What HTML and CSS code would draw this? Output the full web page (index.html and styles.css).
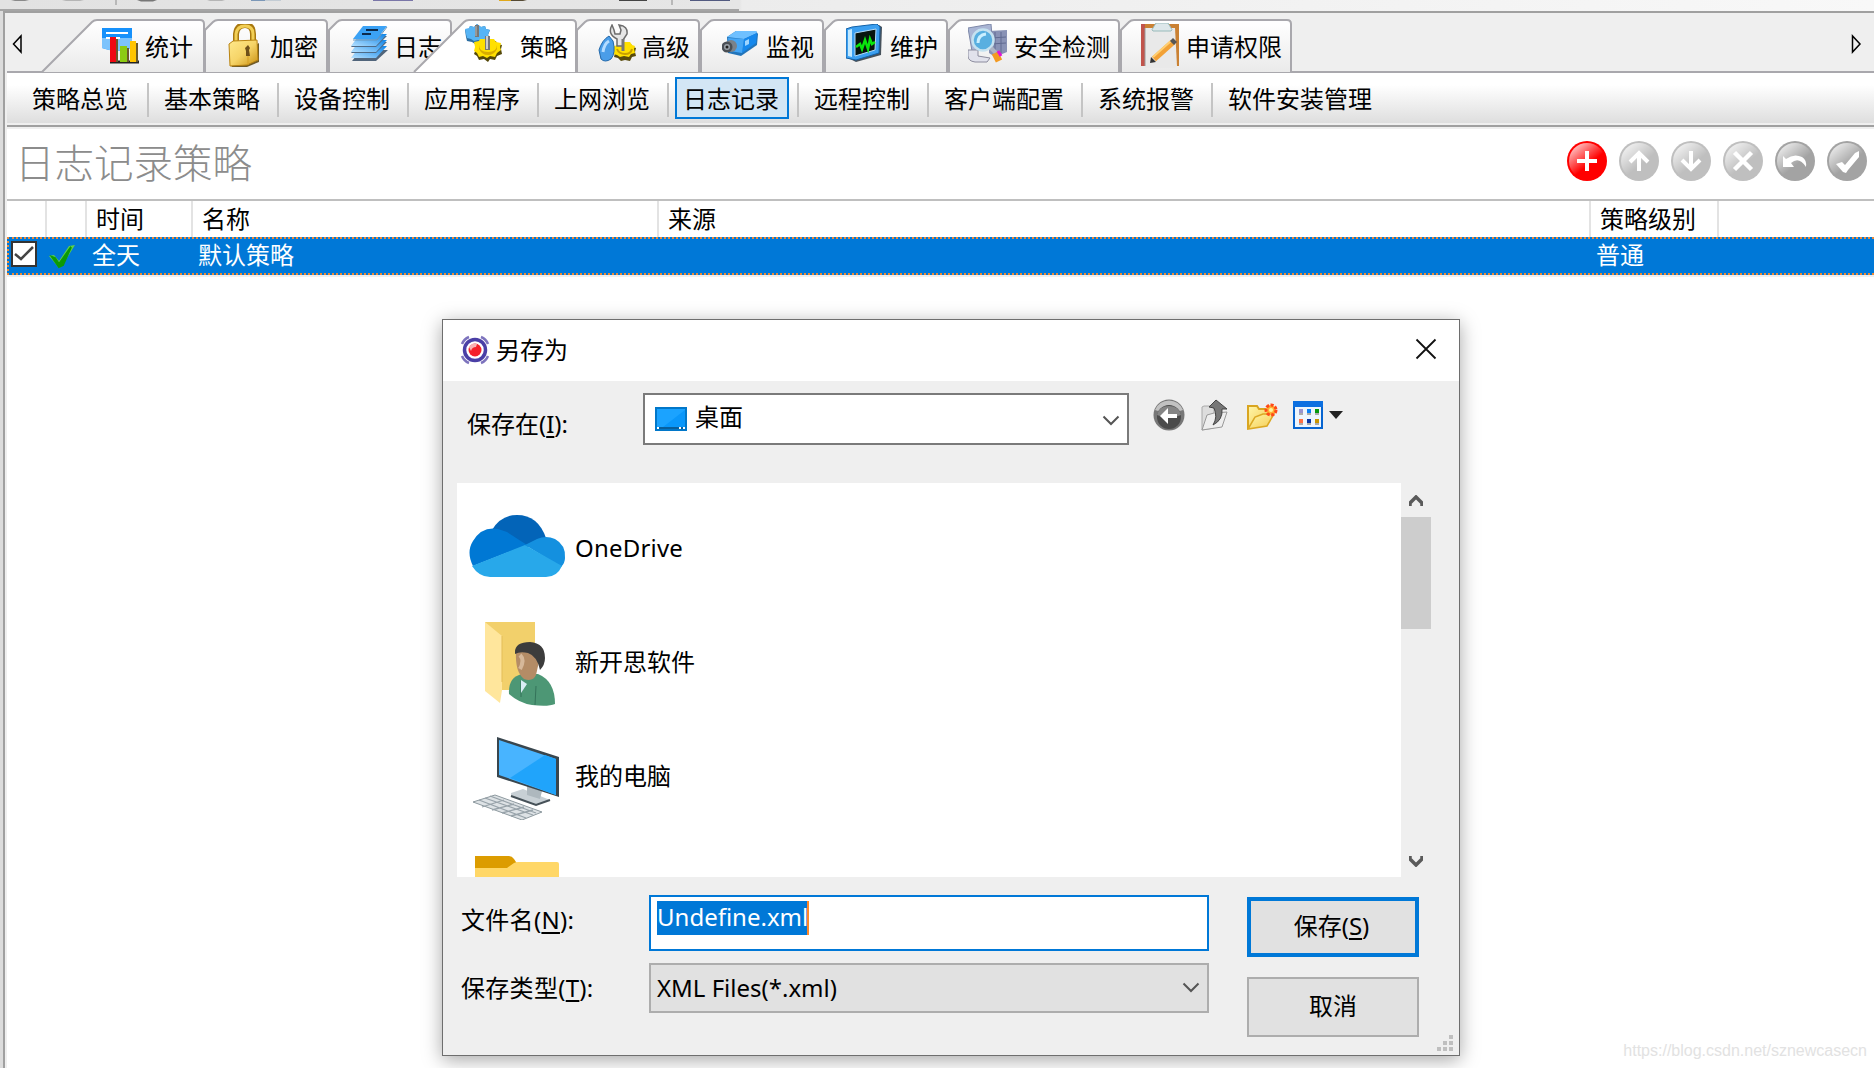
FILE: index.html
```
<!DOCTYPE html>
<html lang="zh-CN">
<head>
  <meta charset="UTF-8" />
  <meta name="viewport" content="width=device-width, initial-scale=1.0"/>
  <title>日志记录策略</title>
  <link rel="stylesheet" href="styles.css">
</head>
<body>
  <!-- shared gradients -->
  <svg class="defs" width="0" height="0">
    <defs>
      <linearGradient id="tabFill" x1="0" y1="0" x2="0" y2="1"><stop offset="0.1" stop-color="#fefefe"/><stop offset="1" stop-color="#eaeaea"/></linearGradient>
      <linearGradient id="blueR" x1="1" y1="0" x2="0" y2="1"><stop offset="0" stop-color="#0d84e8"/><stop offset="1" stop-color="#b4e0ff"/></linearGradient>
      <linearGradient id="gold" x1="0" y1="0" x2="1" y2="1"><stop offset="0" stop-color="#ffe98c"/><stop offset="0.5" stop-color="#f6d468"/><stop offset="1" stop-color="#c98f10"/></linearGradient>
      <linearGradient id="gloss" x1="0.15" y1="0.1" x2="0.55" y2="0.6"><stop offset="0" stop-color="#fff" stop-opacity="0.75"/><stop offset="1" stop-color="#fff" stop-opacity="0"/></linearGradient>
      <linearGradient id="folder" x1="0" y1="0" x2="1" y2="1"><stop offset="0" stop-color="#fff6a8"/><stop offset="1" stop-color="#f3cb52"/></linearGradient>
    </defs>
  </svg>

  <div class="toolbar">
    <svg width="760" height="11">
      <path d="M11 0h18l-4 1H15z" fill="#8a8a8a"/><path d="M62 0h22l-4 1H66z" fill="#b5b5b5"/>
      <path d="M115 0h2v5h-2z" fill="#b8b8b8"/>
      <path d="M137 0h20l-4 1.5H141z" fill="#777"/><path d="M207 0h18l-3 1H210z" fill="#b5b5b5"/>
      <path d="M251 0h14v1h-14z" fill="#7c98b8"/><path d="M265 0h16v1h-16z" fill="#c3ccd4"/><path d="M373 0h40v1h-40z" fill="#7a76a8"/>
      <path d="M499 0h12v1h-12z" fill="#e0a81a"/><path d="M511 0h16l-4 1h-12z" fill="#554a34"/><path d="M619 0h28v1h-28z" fill="#444"/>
      <path d="M671 0h2v5h-2z" fill="#b8b8b8"/><path d="M690 0h40v1h-40z" fill="#525a80"/>
    </svg>
  </div>

  <div class="window">
    <div class="tabs">
      <svg class="scroll-arrow" width="12" height="20" viewBox="0 0 12 20"><path d="M9 2v16L1.500 10z"/></svg>
      <div class="tab first">
        <svg class="shape" width="165" height="54"><path d="M1 53L51 3q2-2 5-2H159q4 0 4 4V53"/></svg>
        <svg class="icon" width="40" height="44" viewBox="0 0 40 44">
          <path d="M1 4h30v20q-14 6-30 0z" fill="#1691fb"/><path d="M1 14h30v10q-14 6-30 0z" fill="#7cc3fc"/>
          <path d="M5 9h22M5 14h14" stroke="#fff" stroke-width="2"/>
          <path d="M9 38h29" stroke="#222" stroke-width="3"/>
          <path d="M9 13h6v25H9z" fill="#f00812"/><path d="M19 22h7v16h-7z" fill="#8ccb13"/><path d="M29 17h6v21h-6z" fill="#ffc400"/>
          <path d="M16 15v23M27 24v14M36 19v19" stroke="#6b5a2a" stroke-width="2"/>
        </svg>
        <span>统计</span>
      </div>
      <div class="tab">
        <svg class="shape" width="125" height="54"><path d="M1 53V11L9 3q2-2 5-2H119q4 0 4 4V53"/></svg>
        <svg class="icon" width="40" height="44" viewBox="0 0 40 44">
          <path d="M10 20V10q1-9 9-9t8 9v8" fill="none" stroke="#a8780f" stroke-width="6"/><path d="M10 20V10q1-8 9-8t8 8v8" fill="none" stroke="#f2cf55" stroke-width="3"/>
          <path d="M4 40l2 3h15l12-5V19z" fill="#6f5b28"/>
          <path d="M3 20l4-3 24-1 1 20-11 5-17 1z" fill="url(#gold)" stroke="#b98311"/><path d="M22 22v19" stroke="#d59f22"/>
          <path d="M19 24l3-3 2 3-1 2 1 6h-4v-5z" fill="#6e501a"/>
        </svg>
        <span>加密</span>
      </div>
      <div class="tab">
        <svg class="shape" width="125" height="54"><path d="M1 53V11L9 3q2-2 5-2H119q4 0 4 4V53"/></svg>
        <svg class="icon" width="40" height="44" viewBox="0 0 40 44">
          <path d="M11 26h27L26 37H2z" fill="#51657b"/>
          <path d="M10 22h27L26 34H1z" fill="url(#blueR)"/><path d="M10 18h27L26 29H1z" fill="#4e6b87"/>
          <path d="M10 16h27L26 28H1z" fill="url(#blueR)"/><path d="M10 12h27L26 23H1z" fill="#4e6b87"/>
          <path d="M10 10h27L26 22H1z" fill="url(#blueR)"/><path d="M13 2h24L27 15H3z" fill="#3ba2f5"/><path d="M3 16h24L37 3" fill="none" stroke="#6f95b5"/>
          <path d="M16 6h12M12 10h9" stroke="#0c2a4c" stroke-width="2"/>
        </svg>
        <span>日志</span>
      </div>
      <div class="tab active">
        <svg class="shape" width="165" height="54"><path d="M1 53L51 3q2-2 5-2H159q4 0 4 4V53"/></svg>
        <svg class="icon" width="40" height="44" viewBox="0 0 40 44">
          <path d="M1 6l4-1 1-3 4 1 3-3 4 3 4-1 1 3 4 1-2 5 2 4-4 2-2 3-5-1-4 1-3-2-5-1-1-4z" fill="#2c6ea2"/>
          <path d="M1 5l4-1 1-2 4 1 3-3 4 3 4-1 1 3 4 1-2 4 1 3-4 2-2 2-5-1-4 1-3-2-4-1-1-4z" fill="#56b4f5"/>
          <path d="M11 1h4v12h-4z" fill="#777"/><path d="M12 2v10" stroke="#bbb"/>
          <path d="M11 20h5v-3h16l1 3 5 1-1 4 1 5-5 2-2 4-5-1-2 3-4-3-5 1-2-4-3-2 2-5z" fill="#544809"/>
          <path d="M10 18l5-1 1-2h14l2 3 5 1-1 4 1 3-4 3-2 4-5-1-3 2-4-2-4 1-2-4-3-2 1-4z" fill="#ffe000"/>
          <path d="M15 21q0 7 9 7t9-7v4q-3 6-9 6t-9-6z" fill="#d8ac00"/><path d="M21 12h5v14h-5z" fill="#777"/><path d="M23 12v13" stroke="#ccc" stroke-width="2"/>
        </svg>
        <span>策略</span>
      </div>
      <div class="tab">
        <svg class="shape" width="125" height="54"><path d="M1 53V11L9 3q2-2 5-2H119q4 0 4 4V53"/></svg>
        <svg class="icon" width="40" height="44" viewBox="0 0 40 44">
          <path d="M16 24l4-1 1-3h12l2 3 3 1-1 4 1 4-4 1-2 4-5-1-4 1-3-3-4-1 1-4z" fill="#594b0b"/>
          <path d="M16 22l4-1 1-3h11l2 3 3 1-1 3 1 4-4 1-2 3-5-1-4 1-3-2-4-1 1-4z" fill="#ffe000"/><path d="M19 25q2 5 8 5t7-5" fill="none" stroke="#c99f00" stroke-width="2"/>
          <path d="M1 26Q4 16 11 12l4 5q3 12-2 18-6 4-10 0z" fill="#4a9de8" stroke="#2268aa"/><path d="M5 28q1-8 6-11" fill="none" stroke="#b4dcff" stroke-width="3"/>
          <path d="M14 1l2 5 1 4h5l1-4-2-5q9 1 8 9l-4 6v6h-6v-7q-10-5-5-14z" fill="#e6e6e6" stroke="#6c6c6c" stroke-width="1.500"/>
          <path d="M25 15v12" stroke="#777" stroke-width="3"/>
        </svg>
        <span>高级</span>
      </div>
      <div class="tab">
        <svg class="shape" width="125" height="54"><path d="M1 53V11L9 3q2-2 5-2H119q4 0 4 4V53"/></svg>
        <svg class="icon camera" width="40" height="44" viewBox="2 0 40 44">
          <path d="M7 12l9-6h20l2 3-1 11-16 11-13-3z" fill="#2375ba"/><path d="M7 12l9-6h20l1 2-13 6z" fill="#6fc0ff"/><path d="M24 14l13-6-1 10-14 10z" fill="#1688ec"/><path d="M8 13l16 1-2 14-12-2z" fill="#45a6f5"/>
          <path d="M25 16l4-2v5l-4 2z" fill="#9fd5ff"/>
          <ellipse cx="11" cy="21" rx="6" ry="6" fill="#7a828a"/><circle cx="7" cy="22" r="5.500" fill="#4a4f55"/><circle cx="7" cy="22" r="3" fill="#9aa1a8"/><circle cx="7" cy="22" r="1.500" fill="#222"/>
        </svg>
        <span>监视</span>
      </div>
      <div class="tab">
        <svg class="shape" width="125" height="54"><path d="M1 53V11L9 3q2-2 5-2H119q4 0 4 4V53"/></svg>
        <svg class="icon" width="40" height="44" viewBox="1 0 40 44">
          <path d="M3 34l8 4 25-7 1-28-3-2z" fill="#47525c"/><path d="M1 5l6-2L32 0l3 3-1 26-23 7-10-2z" fill="#3b9ff0" stroke="#1161a8"/><path d="M3 6l4-1v28l-4-1z" fill="#c1e8ff"/>
          <path d="M10 9l21-4-1 21-20 6z" fill="#08150e" stroke="#b3dcfb"/>
          <path d="M11 23l4-3 2 5 3-9 3 9 2-10 2 5 3-2" fill="none" stroke="#09e60c" stroke-width="2.500"/>
        </svg>
        <span>维护</span>
      </div>
      <div class="tab wide">
        <svg class="shape" width="173" height="54"><path d="M1 53V11L9 3q2-2 5-2H167q4 0 4 4V53"/></svg>
        <svg class="icon" width="42" height="44" viewBox="1 0 42 44">
          <path d="M22 7l18-1v22l-12 5-6-4z" fill="#8992b5"/><path d="M28 8v22M34 8v21M24 14l15-1M24 20l15-1" stroke="#616b91"/>
          <path d="M1 4L24 0l2 24-21 3z" fill="#a9b5d4" stroke="#7d88a8"/><path d="M1 26h10v6l12 2-3 4H8q-7-1-7-6z" fill="#e1e2ec" stroke="#8c8c9e"/>
          <circle cx="16" cy="16" r="10.500" fill="#58afe0" stroke="#c5e2f0" stroke-width="2.500"/><path d="M11 19q0-8 8-9" stroke="#c9efff" stroke-width="3" fill="none"/>
          <path d="M24 24l5 5" stroke="#aeb4c4" stroke-width="4"/><path d="M28 29l4 8" stroke="#f39a21" stroke-width="7"/><path d="M31 27l3 5" stroke="#e014d8" stroke-width="3"/>
        </svg>
        <span>安全检测</span>
      </div>
      <div class="tab wide">
        <svg class="shape" width="173" height="54"><path d="M1 53V11L9 3q2-2 5-2H167q4 0 4 4V53"/></svg>
        <svg class="icon" width="42" height="46" viewBox="0 0 42 46">
          <path d="M1 1h38v42H1z" fill="#ca8133"/><path d="M1 1h4v42H1z" fill="#c1544c"/>
          <path d="M5 5h30l2 38-3 2H5z" fill="#e9e9e9"/><path d="M5 5v38" stroke="#999"/>
          <path d="M16 0h12l3 5q2 2 0 3H13q-2-1 0-3z" fill="#dde7ea" stroke="#9bb"/>
          <path d="M14 36L33 19" stroke="#f2a136" stroke-width="6"/><path d="M13 34L31 18" stroke="#ffcf73" stroke-width="2"/><path d="M10 40l1-6 5 5z" fill="#333"/><path d="M30 18l3-3 4 4-3 3z" fill="#555"/>
        </svg>
        <span>申请权限</span>
      </div>
      <div class="spacer"></div>
      <svg class="scroll-arrow right" width="12" height="20" viewBox="0 0 12 20"><path d="M2.500 2v16L10 10z"/></svg>
    </div>

    <div class="submenu">
      <a>策略总览</a>
      <a>基本策略</a>
      <a>设备控制</a>
      <a>应用程序</a>
      <a>上网浏览</a>
      <a class="selected">日志记录</a>
      <a>远程控制</a>
      <a>客户端配置</a>
      <a>系统报警</a>
      <a>软件安装管理</a>
    </div>

    <div class="heading">
      <h1>日志记录策略</h1>
      <div class="actions">
        <svg viewBox="0 0 40 40"><circle cx="20" cy="20" r="20" fill="#f00"/><circle cx="20" cy="20" r="18" fill="url(#gloss)"/><path d="M20 10v20M10 20h20" stroke="#fff" stroke-width="4"/></svg>
        <svg viewBox="0 0 40 40"><circle cx="20" cy="20" r="20" fill="#bfbfbf"/><circle cx="20" cy="20" r="18" fill="url(#gloss)"/><path d="M20 30V13M11 21l9-9 9 9" fill="none" stroke="#fff" stroke-width="4"/></svg>
        <svg viewBox="0 0 40 40"><circle cx="20" cy="20" r="20" fill="#bfbfbf"/><circle cx="20" cy="20" r="18" fill="url(#gloss)"/><path d="M20 10v17M11 19l9 9 9-9" fill="none" stroke="#fff" stroke-width="4"/></svg>
        <svg viewBox="0 0 40 40"><circle cx="20" cy="20" r="20" fill="#bfbfbf"/><circle cx="20" cy="20" r="18" fill="url(#gloss)"/><path d="M11.500 11.500l17 17M28.500 11.500l-17 17" stroke="#fff" stroke-width="4.500"/></svg>
        <svg viewBox="0 0 40 40"><circle cx="20" cy="20" r="20" fill="#a3a3a3"/><circle cx="20" cy="20" r="18" fill="url(#gloss)"/><path d="M8 15v11h11l-3-4q8-7 15 4 1-7-4-10-8-4-16 2z" fill="#fff"/></svg>
        <svg viewBox="0 0 40 40"><circle cx="20" cy="20" r="20" fill="#a3a3a3"/><circle cx="20" cy="20" r="18" fill="url(#gloss)"/><path d="M9 23l6-2 3 3 10-12 4-2v6l-11 13-2 3-3-1z" fill="#fff"/></svg>
      </div>
    </div>

    <div class="grid-row grid-head">
      <div></div><div></div><div>时间</div><div>名称</div><div>来源</div><div>策略级别</div><div></div>
    </div>
    <div class="grid-row grid-item">
      <div><svg width="26" height="26"><path d="M1 1h24v24H1z" fill="#fff" stroke="#333" stroke-width="2"/><path d="M4 13l6 5L22 6" fill="none" stroke="#444" stroke-width="2.500"/></svg></div>
      <div><svg width="26" height="24"><path d="M0 11l5-1 5 6L20 1l6-1-13 21-3 2z" fill="#5fcf4c"/><path d="M3 12l3 1 4 6L22 2l-8 18-4 2z" fill="#0c9a05" stroke="#0c9a05" stroke-width="2"/></svg></div>
      <div>全天</div><div>默认策略</div><div></div><div>普通</div><div></div>
    </div>
    <div class="grid-body"></div>
  </div>

  <div class="dialog">
    <div class="title-bar">
      <svg class="logo" width="30" height="30" viewBox="0 0 30 30">
        <g fill="none" stroke="#7d73bd" stroke-width="2.500"><path d="M2 9Q4 4 9 2M21 2q5 2 7 7M2 21q2 5 7 7M21 28q5-2 7-7"/></g>
        <circle cx="15" cy="15" r="10.500" fill="#fff" stroke="#4a3fa6" stroke-width="3.500"/>
        <circle cx="15" cy="15" r="6.500" fill="#f5202a"/><path d="M9 12q3-5 8-3l-1 3q-4 0-5 4z" fill="#f9b3b6"/>
      </svg>
      <span>另存为</span>
      <svg class="close" width="22" height="22"><path d="M1.500 1.500l19 19M20.500 1.500l-19 19" stroke="#111" stroke-width="1.800"/></svg>
    </div>

    <div class="look-in">
      <label>保存在(<u>I</u>):</label>
      <div class="combo">
        <svg width="32" height="24"><path d="M1 1h30v22H1z" fill="#1ba3ff" stroke="#0177c9" stroke-width="2"/><path d="M30 3v17H8z" fill="#0a97fa"/><path d="M2 20h28v2H2z" fill="#085f9d"/><path d="M2 20h2v2H2zM24 20h2v2h-2zM28 20h2v2h-2z" fill="#fff"/></svg>
        <span>桌面</span>
        <svg class="chevron" width="18" height="12"><path d="M1.500 1.500L9 9l7.500-7.500"/></svg>
      </div>
      <div class="nav-icons">
        <svg width="32" height="32" viewBox="0 0 32 32"><circle cx="16" cy="16" r="15.500" fill="#777"/><path d="M2 11a15 15 0 0 1 28 0q-14 6-28 0z" fill="#c2c2c2"/><circle cx="16" cy="18" r="12" fill="#4b4b4b"/><path d="M4 16q2-9 12-9t12 9q-12 5-24 0z" fill="#858585"/><path d="M7 17l8-8v6h9v4h-9v6z" fill="#fff"/></svg>
        <svg width="28" height="32" viewBox="0 0 28 32"><path d="M1 8l2-1h7l3 3v19l-12 2z" fill="#ddd" stroke="#aaa"/><path d="M1 31l5-15 7-2 13-1-5 15z" fill="#eee" stroke="#999"/><path d="M8 8l7-7 11 9h-5q1 11-9 16 5-8 1-17z" fill="#777" stroke="#444"/></svg>
        <svg width="32" height="28" viewBox="0 0 32 28"><path d="M1 27V4h9l2 3h9v7" fill="url(#folder)" stroke="#d9a520" stroke-width="2"/><path d="M1 27l7-12 8-3h11l-7 12z" fill="url(#folder)" stroke="#dba823" stroke-width="1.500"/><circle cx="24" cy="8" r="5" fill="#ffb133" stroke="#ff4a18" stroke-width="3" stroke-dasharray="3 1.500"/><circle cx="24" cy="8" r="2" fill="#fff3a0"/></svg>
        <svg width="50" height="28" viewBox="0 0 50 28"><path d="M1 1h28v26H1z" fill="#edf5fd" stroke="#0664d0" stroke-width="2"/><path d="M0 0h30v6H0z" fill="#0c6fe0"/>
          <path d="M6 8h4v4H6z" fill="#9893cd"/><path d="M14 8h4v4h-4z" fill="#0a80f5"/><path d="M22 8h4v4h-4z" fill="#06990e"/><path d="M6 18h4v4H6z" fill="#ff7043"/><path d="M14 18h4v4h-4z" fill="#0936a5"/><path d="M22 18h4v4h-4z" fill="#c89500"/>
          <path d="M6 12h4v2H6zM14 12h4v2h-4zM22 12h4v2h-4zM6 22h4v2H6zM14 22h4v2h-4zM22 22h4v2h-4z" fill="#aaa"/><path d="M36 10h14l-7 8z" fill="#222"/></svg>
      </div>
    </div>

    <div class="file-area">
      <div class="files">
        <div class="file">
          <svg width="100" height="84" viewBox="0 0 100 84">
            <path d="M24 26Q33 11 49 11q21 0 29 23L50 48z" fill="#0364b8"/>
            <path d="M5 62Q-2 48 5 37q9-15 25-12l9 3 20 13z" fill="#0078d4"/>
            <path d="M57 41l12-6q9-4 18 0 11 6 10 19 0 5-4 9z" fill="#1490df"/>
            <path d="M4 62l53-21 37 21q-5 11-16 11H22q-11 0-18-11z" fill="#28a8ea"/>
          </svg>
          <span>OneDrive</span>
        </div>
        <div class="file">
          <svg width="100" height="84" viewBox="0 0 100 84">
            <path d="M17 0h50v68H30z" fill="#f2d06b"/><path d="M17 0l17 14v54l-2 13-15-12z" fill="#ffe69c"/><path d="M34 14v46" stroke="#e3bd58"/>
            <path d="M41 72q-1-17 13-20h16q17 7 17 30-7 3-23 1-13-2-23-11z" fill="#4d9775"/><path d="M68 64l-1 19M53 59v16" stroke="#34735a"/>
            <path d="M53 58l6 4-6 9z" fill="#d9edf5"/><path d="M48 30q-1 20 8 27 9 3 12-4l5-22-18-8z" fill="#b48c66"/><path d="M52 33q5 5 0 14" stroke="#d6b89a" stroke-width="4" fill="none"/>
            <path d="M47 30q0-10 15-10 15 1 15 16 0 7-5 12-3-14-12-17-8-2-13 1z" fill="#3c3c3c"/>
          </svg>
          <span>新开思软件</span>
        </div>
        <div class="file">
          <svg width="100" height="84" viewBox="0 0 100 84">
            <path d="M43 57l12-4 27 11-14 5-25-9z" fill="#c8d0d5"/><path d="M43 60l25 9 14-5" fill="none" stroke="#465158" stroke-width="2"/><path d="M59 50l15 5-2 8-13-4z" fill="#aeb8be"/>
            <path d="M29 1l62 20v40L29 41z" fill="#39464e"/><path d="M31 4l57 19v36L31 39z" fill="#48b4ff"/><path d="M42 42l35-23 11 4v36z" fill="#20a4fb"/>
            <path d="M5 66l22-7 47 17-20 8z" fill="#dde2e5" stroke="#8d999f"/><path d="M11 64l47 18M17 62l48 17M22 60l46 17M14 71l22-7M24 74l22-6M34 77l22-6M43 80l22-6" stroke="#98a3aa" stroke-width="1.300"/>
          </svg>
          <span>我的电脑</span>
        </div>
        <div class="file">
          <svg width="100" height="84" viewBox="0 0 100 84"><path d="M7 6h34q3 0 5 3l4 6-6 5H7z" fill="#dc9c00"/><path d="M7 18h32l7-5q2-1 4-1h39q2 0 2 2v66H7z" fill="#ffd767"/></svg>
        </div>
      </div>
      <div class="scrollbar">
        <svg width="14" height="12"><path d="M1 11V8l6-6 6 6v3"/></svg>
        <div class="thumb"></div>
        <svg class="down" width="14" height="12"><path d="M1 1v3l6 6 6-6V1"/></svg>
      </div>
    </div>

    <div class="bottom">
      <div class="fields">
        <label>文件名(<u>N</u>):</label>
        <div class="name-input"><span class="selection">Undefine.xml</span></div>
        <label>保存类型(<u>T</u>):</label>
        <div class="type-combo">
          <span>XML Files(*.xml)</span>
          <svg class="chevron" width="18" height="12"><path d="M1.500 1.500L9 9l7.500-7.500"/></svg>
        </div>
      </div>
      <div class="buttons">
        <button class="default">保存(<u>S</u>)</button>
        <button>取消</button>
      </div>
    </div>
    <svg class="grip" width="16" height="16"><path d="M12 0h4v4h-4zM6 6h4v4H6zM12 6h4v4h-4zM0 12h4v4H0zM6 12h4v4H6zM12 12h4v4h-4z" fill="#bfbfbf"/></svg>
  </div>

  <div class="watermark">https://blog.csdn.net/sznewcasecn</div>
</body>
</html>
```

FILE: styles.css
```
* { margin: 0; padding: 0; box-sizing: border-box; }
html, body { height: 100%; overflow: hidden; }
body {
  display: flex;
  flex-direction: column;
  font-family: "Noto Sans CJK SC", sans-serif;
  font-size: 24px;
  font-weight: 400;
  line-height: 36px;
  color: #000;
  background: #dcdcdc;
  white-space: nowrap;
}
svg { display: block; flex: none; }
.defs { position: absolute; }

.toolbar {
  height: 11px;
  background: linear-gradient(to right, #e2e2e2 0, #e6e6e6 740px, #ececec 742px, #f8f8f8 100%);
}
.toolbar svg { border-bottom: 2px solid #a5a5a5; width: 739px; }

.window {
  flex: 1;
  display: flex;
  flex-direction: column;
  margin-left: 3px;
  padding-left: 2px;
  border-left: 2px solid #a0a0a0;
  border-top: 2px solid #a0a0a0;
  background: #efefef;
}

/* Tabs */
.tabs {
  display: flex;
  height: 60px;
  padding-top: 6px;
  border-bottom: 2px solid #a9a8ad;
}
.scroll-arrow { margin: 15px 17px 0 5px; fill: none; stroke: #000; stroke-width: 1.500; }
.scroll-arrow.right { margin: 15px 12px 0 0; }
.tab {
  position: relative;
  display: flex;
  align-items: center;
  width: 124px;
  height: 54px;
  padding-left: 22px;
}
.tab .icon, .tab span { position: relative; }
.tab span { margin-left: 4px; margin-bottom: 1px; }
.tab .icon { margin-bottom: 1px; }
.tab .icon.camera { margin-top: 3px; }
.shape { position: absolute; left: 0; top: 0; fill: url(#tabFill); stroke: #a9a8ad; stroke-width: 2; }
.tab.first { width: 163px; padding-left: 60px; }
.tab.active { width: 163px; margin-left: -39px; padding-left: 51px; z-index: 1; }
.tab.active .shape { fill: #fff; }
.tab.active span { margin-left: 16px; }
.tab.wide { width: 172px; padding-left: 20px; }
.spacer { flex: 1; }

.submenu {
  display: flex;
  align-items: center;
  height: 54px;
  padding-left: 11px;
  border-bottom: 2px solid #a0a0a0;
  background: linear-gradient(#fff 12px, #dedede 50px, #efefef 50px);
}
.submenu a {
  position: relative;
  height: 42px;
  margin: -2px 8px 0 8px;
  padding: 0 7px;
  border: 2px solid transparent;
  line-height: 37px;
}
.submenu a:first-child { margin-left: 5px; padding-right: 9px; }
.submenu a + a::before {
  content: "";
  position: absolute;
  left: -10px;
  top: 4px;
  width: 2px;
  height: 34px;
  background: #c4c4c4;
}
.submenu a.selected { padding: 0 8px 0 6px; border-color: #0078d7; background: #d3e6f5; }

.heading {
  display: flex;
  justify-content: space-between;
  height: 74px;
  padding: 12px 7px 0 8px;
  border-top: 2px solid #efefef;
  border-bottom: 2px solid #bfbfbf;
  background: #fff;
}
.heading h1 { font-size: 39.500px; font-weight: 300; line-height: 39px; color: #8c8c8c; }
.actions { display: flex; gap: 12px; }
.actions svg { width: 40px; height: 40px; }

/* Policy list */
.grid-row { display: grid; grid-template-columns: 40px 40px 106px 466px 932px 128px 1fr; background: #fff; }
.grid-head { height: 36px; line-height: 34px; }
.grid-head div { border-right: 2px solid #e3e3e3; padding-left: 9px; }
.grid-head div:last-child { border-right: 0; }
.grid-item {
  height: 38px;
  line-height: 30px;
  border: 2px dotted #ee8a36;
  border-right: 0;
  color: #fff;
  background: #0078d7;
}
.grid-item div { padding-left: 3px; }
.grid-item div:nth-child(1) { padding: 2px 0 0 2px; }
.grid-item div:nth-child(2) { padding: 6px 0 0 0; }
.grid-body { flex: 1; border-top: 2px solid #efefef; background: #fff; }

/* Save as dialog */
.dialog {
  position: absolute;
  left: 442px;
  top: 319px;
  width: 1018px;
  height: 737px;
  border: 1px solid #6e6e6e;
  background: #efefef;
  box-shadow: 0 4px 18px rgba(0,0,0,.35);
}
.dialog, .dialog button { font-family: "Noto Sans", "Noto Sans CJK SC", sans-serif; font-weight: 400; }
.title-bar {
  display: flex;
  align-items: center;
  height: 61px;
  padding: 0 22px 3px 17px;
  background: #fff;
}
.title-bar .logo { margin-top: 1px; }
.title-bar span { margin: 2px 0 0 6px; }
.title-bar .close { margin-left: auto; }
.look-in { display: flex; height: 102px; padding: 12px 0 0 24px; }
.look-in label { width: 176px; line-height: 61px; }
.combo {
  display: flex;
  align-items: center;
  width: 486px;
  height: 52px;
  padding: 0 7px 0 10px;
  border: 2px solid #7a7a7a;
  background: #fff;
}
.combo span { margin: -5px 0 0 8px; }
.combo .chevron { margin-top: 3px; }
.chevron { margin-left: auto; fill: none; stroke: #555; stroke-width: 2; }
.nav-icons { display: flex; align-items: center; height: 44px; padding-left: 24px; gap: 16px; }
.nav-icons svg:nth-child(2) { margin-right: 2px; }
.nav-icons svg:nth-child(3) { margin-top: 2px; }
.nav-icons svg:nth-child(4) { margin-left: -2px; }

.file-area { display: flex; height: 394px; margin-left: 14px; }
.files { width: 944px; padding-top: 8px; overflow: hidden; background: #fff; }
.file { display: flex; align-items: center; height: 114px; padding-left: 11px; }
.file + .file svg { margin-top: 4px; }
.file:first-child svg { margin-top: -4px; }
.file span { margin-left: 7px; }
.file:first-child span { letter-spacing: 0.2px; }
.scrollbar { display: flex; flex-direction: column; align-items: center; width: 30px; padding: 12px 0 10px; }
.scrollbar svg { fill: none; stroke: #5a5a5a; stroke-width: 3.500; }
.scrollbar .down { margin-top: auto; }
.thumb { width: 30px; height: 112px; margin-top: 10px; background: #cdcdcd; }

.bottom { display: flex; padding: 18px 0 0 18px; }
.fields { display: grid; grid-template-columns: 188px 560px; grid-template-rows: 56px 50px; row-gap: 12px; }
.fields label { line-height: 49px; letter-spacing: 0.3px; }
.name-input { padding: 4px 6px; border: 2px solid #0078d7; background: #fff; }
.selection {
  display: block;
  width: 152px;
  height: 34px;
  line-height: 32px;
  border-right: 2px solid #ff8728;
  color: #fff;
  background: #0078d7;
}
.type-combo {
  display: flex;
  align-items: center;
  padding: 0 7px 0 6px;
  border: 2px solid #adadad;
  background: #e1e1e1;
}
.buttons { display: flex; flex-direction: column; gap: 20px; padding: 2px 0 0 38px; }
.buttons button {
  width: 172px;
  height: 60px;
  padding: 0 0 5px 0;
  border: 2px solid #adadad;
  background: #e1e1e1;
  font-size: 24px;
}
.buttons button.default { padding-right: 3px; border: 4px solid #0078d7; }
u { text-decoration-thickness: 2px; text-underline-offset: 3px; }
.grip { position: absolute; right: 6px; bottom: 4px; }

.watermark {
  position: absolute;
  right: 7px;
  bottom: 5px;
  font-family: "Liberation Sans", sans-serif;
  font-size: 16px;
  line-height: 24px;
  font-weight: 400;
  color: #e2e2e2;
}
```
